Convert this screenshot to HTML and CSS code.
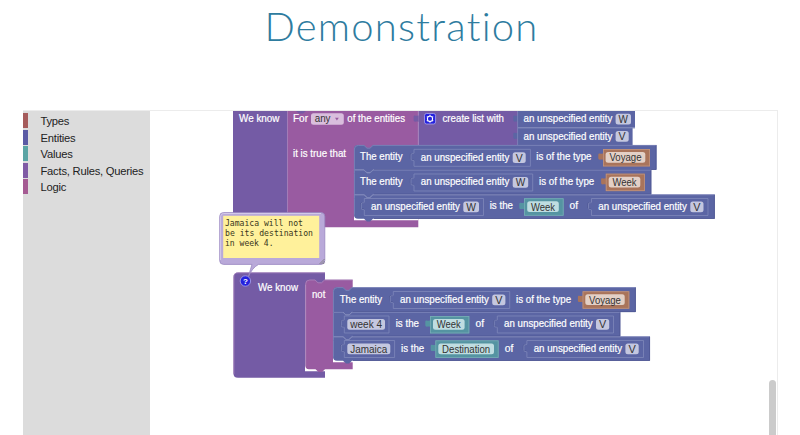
FILE: index.html
```html
<!DOCTYPE html>
<html lang="en">
<head>
<meta charset="utf-8">
<title>Demonstration</title>
<link rel="stylesheet" href="styles.css">
</head>
<body>
<h1 class="title">Demonstration</h1>
<main class="editor">
  <nav class="toolbox">
    <div class="category types">Types</div>
    <div class="category entities">Entities</div>
    <div class="category values">Values</div>
    <div class="category facts">Facts, Rules, Queries</div>
    <div class="category logic">Logic</div>
  </nav>
  <section class="workspace">
    <svg id="canvas" class="canvas" viewBox="150 111 627 324"></svg>
    <div class="scrollbar"></div>
  </section>
</main>
<script src="blocks.js"></script>
</body>
</html>
```
FILE: styles.css
```css
body {
  margin: 0;
  height: 435px;
  overflow: hidden;
  display: flex;
  flex-direction: column;
  background: #fff;
  font-family: "Liberation Sans", Arial, sans-serif;
}
.title {
  margin: 0;
  height: 110px;
  box-sizing: border-box;
  padding: 2px 0 0 3px;
  text-align: center;
  font: 300 40px/49px Lato, sans-serif;
  letter-spacing: 1.25px;
  color: #2e7c9f;
}
.editor {
  flex: 1;
  display: flex;
  margin: 0 22px 0 23px;
  border-top: 1px solid #ececec;
  border-right: 1px solid #ececec;
}
.toolbox {
  width: 127px;
  background: #dcdcdc;
  padding-top: 2px;
  box-sizing: border-box;
}
.category {
  height: 15px;
  margin-bottom: 1.6px;
  border-left: 5px solid;
  padding-left: 12.5px;
  font-size: 11.2px;
  letter-spacing: -.22px;
  line-height: 16px;
  white-space: nowrap;
  color: #222;
}
.types { border-left-color: #a55b5b; }
.entities { border-left-color: #5b5ba5; }
.values { border-left-color: #5ba5a5; }
.facts { border-left-color: #805ba5; }
.logic { border-left-color: #a55b93; }
.workspace {
  flex: 1;
  position: relative;
}
.canvas {
  display: block;
  width: 627px;
  height: 324px;
}
.scrollbar {
  position: absolute;
  right: 1px;
  top: 269px;
  bottom: 0;
  width: 7px;
  border-radius: 4px 4px 0 0;
  background: #cbcbcb;
}
.label { font-size: 10.6px; fill: #fff; stroke: #fff; stroke-width: .2px; }
.value { font-size: 10.8px; fill: #333; }
.note { font: 8.1px "DejaVu Sans Mono", monospace; fill: #3a361c; }
.purple { fill: #745ba5; }
.magenta { fill: #995ba1; }
.blue { fill: #5b65a4; }
.orange { fill: #a9745b; }
.teal { fill: #5594a2; }
.edge { fill: none; stroke: #7f88ba; stroke-width: .8; }
.shade { fill: none; stroke: #4c5692; stroke-width: .8; }
.rim { fill: none; stroke: #aa85bd; stroke-width: .8; }
.orange-edge { fill: none; stroke: #c09480; stroke-width: .8; }
.teal-edge { fill: none; stroke: #78adb7; stroke-width: .8; }
.pill { fill: #c4c7df; }
.pill-orange { fill: #e3d0c6; }
.pill-teal { fill: #bfdde1; }
.pill-magenta { fill: #d9bedd; }
.icon-fill { fill: #2421dd; stroke: #aaa5ee; stroke-width: .8; }
.icon-line { fill: none; stroke: #fff; stroke-width: 1.1; }
.icon-text { font: bold 8px "Liberation Sans", sans-serif; fill: #fff; }
.gap { fill: #fff; }
.bubble { fill: #b9a9d9; stroke: #9886c0; stroke-width: .8; }
.bubble-light { fill: none; stroke: #d3c9e8; stroke-width: 1; }
.paper { fill: #fff19b; }
.grip { stroke: #777; stroke-width: .8; }
```
FILE: blocks.js
```js
const out = [];
const path = (cls, d) => out.push(`<path class="${cls}" d="${d}"/>`);
const rect = (cls, x1, y1, x2, y2, r = 0) =>
  out.push(`<rect class="${cls}" x="${x1}" y="${y1}" width="${x2 - x1}" height="${y2 - y1}" rx="${r}"/>`);
const text = (cls, s, x1, x2, y) =>
  out.push(`<text class="${cls}" x="${x1}" y="${y}" textLength="${x2 - x1}" lengthAdjust="spacingAndGlyphs">${s}</text>`);

// Puzzle tab on the left of a value block
const tab = (cls, x, y) =>
  path(cls, `M${x + .3} ${y + 3}v1.3c-1.8 1.4-5-1.4-5 1.6v3.2c0 3 3.2.6 5 1.9v1.2z`);

// Outlined value block nested in a row
const nested = (x1, x2, y) => {
  path('shade', `M${x1 - .4} ${y + 4}c-1 1-3.2-.8-3.2 1.4v3.6c0 2.2 2.2.6 3.2 1.6`);
  path('edge', `M${x1} ${y + 17}V${y + 11.5}c-1-1.2-3 .4-3-1.8V${y + 5.6}c0-2.2 2-.6 3-1.8V${y}H${x2}V${y + 17}z`);
};
const pill = (kind, s, x1, x2, y, pad = 3) => {
  rect(kind, x1, y, x2, y + 10.8, 2.5);
  text('value', s, x1 + pad, x2 - pad, y + 9.2);
};
const entity = (x1, x2, y, p1, p2, name) => {
  nested(x1, x2, y);
  text('label', 'an unspecified entity', x1 + 6.8, p1 - 3.4, y + 11.2);
  pill('pill', name, p1, p2, y + 3);
};
const colored = (color, s, x1, x2, y, p1, p2) => {
  tab(color, x1, y);
  rect(color, x1, y, x2, y + 17.4);
  rect(`${color}-edge`, x1 + .4, y + .4, x2 - .4, y + 17);
  pill(`pill-${color}`, s, p1, p2, y + 3, 3.8);
};
// Statement row with notch; the first and last rows round their left corners
const row = (x1, x2, y1, y2, first, last) => {
  const top = `${first ? `M${x1} ${y1 + 4}q0-4 4-4` : `M${x1} ${y1}`}H${x1 + 10}l3 2.8h3l3-2.8H${x2}`;
  const base = `H${x1 + 19}l-3 2.8h-3l-3-2.8H${x1 + (last ? 4 : 0)}`;
  path('blue', `${top}V${y2}${base}${last ? `q-4 0-4-4` : ''}z`);
  path('edge', `M${x1 + .4} ${y2 - (last ? 4 : 0)}V${y1 + 4}${first ? 'q0-3.6 4-3.6' : `V${y1 + .4}`}H${x1 + 10}l3 2.8h3l3-2.8H${x2}`);
  path('shade', `M${x2 - .4} ${y1 + .5}V${y2 - .3}H${x1 + 20}`);
};

// Upper rule
rect('purple', 233, 111, 289, 214);
path('magenta', 'M287.5 111H418.3V145H376V149H362L354 150V219H418.3V227.3H287.5z');
path('rim', 'M287.5 227V111');
path('purple', 'M296 111h10l-3 2.6h-4z');
path('gap', 'M354 214V220.3H418.3V218H360z');
rect('purple', 418.3, 111, 518, 145);
path('rim', 'M418.3 145V111');
tab('purple', 418.3, 111);
text('label', 'We know', 239, 279.5, 122);
text('label', 'For', 293, 308, 122.3);
rect('pill-magenta', 311, 113.2, 343.8, 124.8, 2.5);
text('value', 'any', 314.7, 330.5, 122.3);
path('magenta', 'M335 117.8h3.8l-1.9 2.7z');
text('label', 'of the entities', 347.3, 405, 122.3);
rect('icon-fill', 424.5, 113.5, 435.6, 124, 2);
path('icon-line', 'M428 116.8l2-.8 2 .8.6 2-.6 2-2 .8-2-.8-.6-2zM430 114.8v1.4M430 121.4v1.4M426.8 116.6l1.1.7M433.2 116.6l-1.1.7M426.8 121l1.1-.7M433.2 121l-1.1-.7');
text('label', 'create list with', 442.5, 504, 122.3);
text('label', 'it is true that', 293, 346, 156.5);
rect('blue', 518, 111, 635, 127.7);
rect('blue', 518, 127.7, 632.6, 145);
tab('blue', 518, 111);
tab('blue', 518, 128.2);
path('edge', 'M517.6 145V111M517.6 128H635');
text('label', 'an unspecified entity', 523.5, 612.3, 122.3);
pill('pill', 'W', 615.6, 631, 113.7);
text('label', 'an unspecified entity', 523.5, 612.3, 139.6);
pill('pill', 'V', 615.6, 628.7, 131);
row(354, 656.5, 145, 169.8, true, false);
row(354, 714.8, 194.4, 218.8, false, true);
row(354, 651.3, 169.8, 194.4, false, false);
path('edge', 'M354 194.8H364l3 2.8h3l3-2.8H651');
text('label', 'The entity', 360, 402.5, 160.2);
entity(414, 530.4, 149.3, 512.7, 525.7, 'V');
text('label', 'is of the type', 536.3, 591.5, 160.2);
colored('orange', 'Voyage', 603, 650, 149, 605.6, 645.3);
text('label', 'The entity', 360, 402.5, 185);
entity(414, 532.7, 174, 512.7, 528.2, 'W');
text('label', 'is of the type', 539, 594.3, 185);
colored('orange', 'Week', 605.8, 644.8, 173.7, 608.7, 640.3);
entity(364.3, 483.5, 198.5, 463.3, 479, 'W');
text('label', 'is the', 489.7, 513, 209.4);
colored('teal', 'Week', 524, 563.6, 198.3, 527.2, 558.8);
text('label', 'of', 569.5, 578, 209.4);
entity(591.5, 708, 198.5, 690.3, 703.5, 'V');

// Lower rule
path('purple', 'M233.5 277q0-4.6 4.6-4.6H325V284H311L305 285V371.3H325V377.8H238q-4.6 0-4.6-4.6z');
path('rim', 'M233.9 374V277q0-4.2 4.2-4.2H325');
path('magenta', 'M305.3 284q0-4.3 4.3-4.3H315l3 2.8h3.5l3-2.8H352.7V291H340L333 292V362.3H352.7V369.3H325l-3 2.7h-3.5l-3-2.7H309q-3.7 0-3.7-4z');
path('rim', 'M305.7 366V284q0-4 4-4H315l3 2.8h3.5l3-2.8H352.7');
row(333, 635.8, 287.2, 312, true, false);
row(333, 650, 336.4, 360.8, false, true);
row(333, 620.3, 312, 336.4, false, false);
path('edge', 'M333 336.8H343l3 2.8h3l3-2.8H620');
out.push('<circle class="icon-fill" cx="245.4" cy="281" r="5.2"/>');
out.push('<text class="icon-text" x="243" y="284">?</text>');
text('label', 'We know', 258, 298, 290.7);
text('label', 'not', 312, 325.3, 298);
text('label', 'The entity', 339.7, 382, 302.5);
entity(393.3, 509.7, 291.5, 492.2, 505.4, 'V');
text('label', 'is of the type', 516, 571.2, 302.5);
colored('orange', 'Voyage', 582.6, 629.3, 291.3, 585.3, 624.7);
nested(344.3, 389, 316);
pill('pill', 'week 4', 347.3, 385, 319);
text('label', 'is the', 395.7, 419, 327.1);
colored('teal', 'Week', 430, 469.3, 316, 433, 464.6);
text('label', 'of', 475.5, 484, 327.1);
entity(497.3, 613.5, 316, 596, 609.2, 'V');
nested(344.3, 394.6, 340.5);
pill('pill', 'Jamaica', 347.3, 390.3, 343.5);
text('label', 'is the', 401, 424.2, 351.7);
colored('teal', 'Destination', 435.4, 498.6, 340.4, 438.3, 494);
text('label', 'of', 504.7, 513.3, 351.7);
entity(526.9, 643.5, 340.5, 625.4, 638.7, 'V');

// Comment bubble
path('bubble', 'M223.5 212.6H321q3.8 0 3.8 3.8V260.6q0 3.8-3.8 3.8H258.5Q252 268 248.5 276.5Q250.5 269 252 264.4H223.5q-3.8 0-3.8-3.8V216.4q0-3.8 3.8-3.8z');
path('bubble-light', 'M220.6 260V216.5q0-3 3-3H321');
rect('paper', 223.2, 215.8, 319.2, 258);
text('note', 'Jamaica will not', 225, 303, 225.6);
text('note', 'be its destination', 225, 313, 235.8);
text('note', 'in week 4.', 225, 273.5, 245.8);
out.push('<path class="grip" d="M319.5 264l5-5M321.5 264l3-3M323.2 264l1.3-1.3"/>');

document.getElementById('canvas').innerHTML = out.join('');
```
